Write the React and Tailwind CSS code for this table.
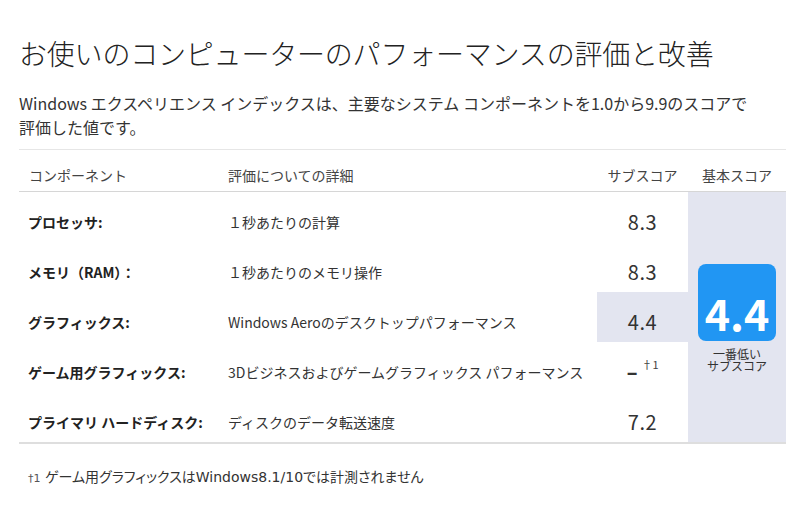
import React from "react";

const rows = [
  { label: "プロセッサ:", detail: "１秒あたりの計算", score: "8.3" },
  { label: "メモリ（RAM）：", detail: "１秒あたりのメモリ操作", score: "8.3" },
  { label: "グラフィックス:", detail: "Windows Aeroのデスクトップパフォーマンス", score: "4.4", low: true },
  { label: "ゲーム用グラフィックス:", detail: "3Dビジネスおよびゲームグラフィックス パフォーマンス", score: "-", note: true },
  { label: "プライマリ ハードディスク:", detail: "ディスクのデータ転送速度", score: "7.2" },
];

export default function App() {
  return (
    <div
      className="w-[793px] h-[509px] bg-white text-[#333] overflow-hidden"
      style={{ fontFamily: '"Noto Sans CJK JP", "Noto Sans", sans-serif' }}
    >
      <div className="pl-[19px] pr-[7px] pt-[34px]">
        <h1 className="text-[28px] leading-[38px] font-light text-[#222] tracking-[-0.2px]">
          お使いのコンピューターのパフォーマンスの評価と改善
        </h1>
        <p className="mt-[19px] w-[735px] text-[16px] leading-[24px] text-[#333]">
          Windows エクスペリエンス インデックスは、主要なシステム コンポーネントを1.0から9.9のスコアで評価した値です。
        </p>
        <div className="mt-[10px] border-t border-[#e6e6e6]">
          <div className="grid grid-cols-[200px_378px_91px_98px] h-[42px] border-b border-[#d6d6d6] text-[14px] text-[#444] items-center pt-[10px]">
            <div className="pl-[10px]">コンポーネント</div>
            <div className="pl-[9px]">評価についての詳細</div>
            <div className="text-center">サブスコア</div>
            <div className="text-center">基本スコア</div>
          </div>
          <div className="grid grid-cols-[200px_378px_91px_98px] border-b-2 border-[#dedede]">
            <div className="col-span-3 grid grid-cols-[200px_378px_91px]">
              {rows.map((r, i) => (
                <React.Fragment key={i}>
                  <div className="h-[50px] flex items-center pt-[10px] pl-[9px] text-[14px] font-bold text-[#222]">
                    {r.label}
                  </div>
                  <div className="h-[50px] flex items-center pt-[10px] pl-[9px] text-[14px] text-[#333]">
                    {r.detail}
                  </div>
                  <div
                    className={
                      "h-[50px] flex items-center justify-center pt-[10px] text-[20px] text-[#333] " +
                      (r.low ? "bg-[#e3e5f0]" : "")
                    }
                  >
                    {r.note ? (
                      <span className="flex items-start pl-[2px]">
                        <span className="inline-block font-bold text-[22px] leading-[28px] scale-x-150 -translate-y-[2px]">-</span>
                        <span className="ml-[5px] mt-[-1px] text-[11px] leading-[14px] text-[#444]">†1</span>
                      </span>
                    ) : (
                      <span className="tracking-[0.5px]">{r.score}</span>
                    )}
                  </div>
                </React.Fragment>
              ))}
            </div>
            <div className="bg-[#e3e5f0] flex flex-col items-center justify-center pt-[2px]">
              <div className="w-[78px] h-[77px] rounded-[8px] bg-[#2196f3] flex items-end justify-center pb-[4px]">
                <span className="text-white font-bold text-[43px] leading-[50px]">4.4</span>
              </div>
              <div className="mt-[7px] text-[12px] leading-[12px] text-center text-[#333] whitespace-pre-line">
                {"一番低い\nサブスコア"}
              </div>
            </div>
          </div>
          <div
            className="mt-[23px] pl-[9px] text-[14px] text-[#333] [font-feature-settings:'palt']"
            style={{ fontFamily: '"DejaVu Sans", "Noto Sans CJK JP", sans-serif' }}
          >
            <span className="text-[11px] text-[#555]">†1</span> ゲーム用グラフィックスはWindows8.1/10では計測されません
          </div>
        </div>
      </div>
    </div>
  );
}
